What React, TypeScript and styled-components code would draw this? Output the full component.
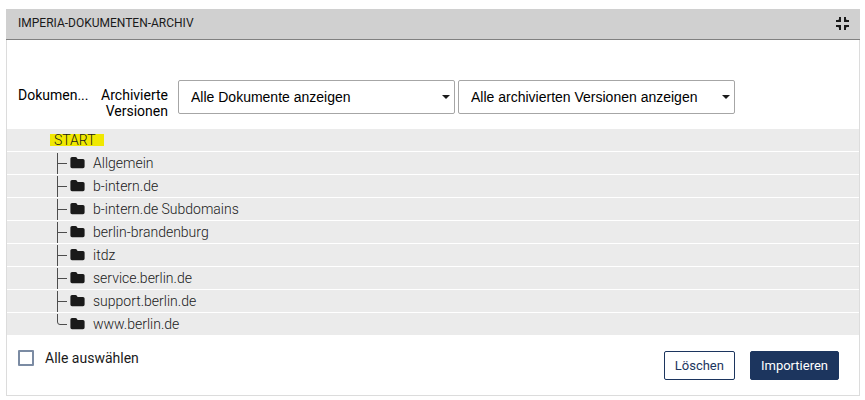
import React from "react";
import styled, { createGlobalStyle } from "styled-components";

const GlobalStyle = createGlobalStyle`
  *, *::before, *::after { box-sizing: border-box; }
  body {
    margin: 0;
    background: #fff;
    color: #1a1a1a;
    font-family: Roboto, "Liberation Sans", sans-serif;
    font-size: 14px;
  }
`;

const Panel = styled.section`
  margin: 9px 5px 4px 6px;
  border: 1px solid #dcdcdc;
  border-top: 0;
`;

const Header = styled.header`
  display: flex;
  align-items: center;
  justify-content: space-between;
  height: 31px;
  margin: 0 -1px;
  padding: 0 10px 0 12px;
  background: #d0d0d0;
  border-bottom: 1px solid #808080;
`;

const Title = styled.h1`
  margin: 0;
  padding-bottom: 2px;
  font-size: 12px;
  font-weight: 400;
  line-height: 16px;
  text-transform: uppercase;
`;

const IconButton = styled.button`
  display: flex;
  padding: 0;
  border: 0;
  background: none;
  color: #1a1a1a;
  cursor: pointer;
`;

const Filters = styled.div`
  display: flex;
  align-items: flex-start;
  padding: 40px 11px 10px;
`;

const FilterLabel = styled.label<{ $width: number }>`
  flex: none;
  width: ${(p) => p.$width}px;
  padding-top: 7px;
  color: #000;
  line-height: 16px;
  text-align: right;
`;

const Selects = styled.div`
  display: flex;
  flex: 0 1 557px;
  gap: 3px;
  margin-left: 10px;
`;

const SelectBox = styled.div`
  position: relative;
  flex: 1 1 0;
  min-width: 0;
`;

const Select = styled.select`
  display: block;
  width: 100%;
  height: 34px;
  padding: 0 24px 0 12px;
  border: 1px solid #a6a6a6;
  border-radius: 2px;
  background: #fff;
  color: #000;
  font-family: "Liberation Sans", Arial, sans-serif;
  font-size: 14px;
  appearance: none;
`;

const Caret = styled.svg`
  position: absolute;
  top: 15px;
  right: 5px;
  pointer-events: none;
`;

const Tree = styled.ul`
  margin: 0;
  padding: 0;
  list-style: none;
`;

const TreeRow = styled.li`
  display: flex;
  align-items: center;
  height: 22px;
  padding-left: 50px;
  background: #ebebeb;
  font-weight: 300;
  line-height: 20px;

  & + & { margin-top: 1px; }
`;

const RootLink = styled.a`
  height: 12px;
  margin-left: -7px;
  padding: 0 8px 0 4px;
  background: #f0e800;
  color: inherit;
  line-height: 12px;
  text-decoration: none;
`;

const NodeLink = styled.a`
  margin-left: 8px;
  color: inherit;
  text-decoration: none;
`;

const Branch = styled.svg`
  flex: none;
  margin-right: 3px;
`;

const Footer = styled.footer`
  display: flex;
  align-items: flex-start;
  justify-content: space-between;
  padding: 14px 20px 15px 11px;
`;

const CheckLabel = styled.label`
  display: flex;
  align-items: center;
  gap: 11px;
  line-height: 18px;
`;

const Checkbox = styled.input`
  width: 16px;
  height: 16px;
  margin: 0;
  border: 2px solid #7b8ba3;
  border-radius: 1px;
  background: #fff;
  appearance: none;

  &:checked { background: #1c355e; }
`;

const Actions = styled.div`
  display: flex;
  gap: 15px;
  margin-top: 2px;
`;

const Button = styled.button<{ $primary?: boolean }>`
  height: 29px;
  padding: 1px 10px 0;
  border: 1px solid #1c355e;
  border-radius: 2px;
  background: ${(p) => (p.$primary ? "#1c355e" : "#fff")};
  color: ${(p) => (p.$primary ? "#fff" : "#1c355e")};
  font-family: inherit;
  font-size: 13px;
  line-height: 16px;
  cursor: pointer;
`;

const folders = [
  "Allgemein",
  "b-intern.de",
  "b-intern.de Subdomains",
  "berlin-brandenburg",
  "itdz",
  "service.berlin.de",
  "support.berlin.de",
  "www.berlin.de",
];

const CollapseIcon = () => (
  <svg width="15" height="14" viewBox="0 0 15 14" fill="currentColor" aria-hidden="true">
    <path d="M4 0h2v5H1V3h2.200L4 2.200zM9 0h2v2.200l.8.8H14v2H9zM1 8h5v5H4v-2.200L3.200 10H1zM9 8h5v2h-2.200l-.8.8V13H9z" />
  </svg>
);

const FolderIcon = () => (
  <svg width="15" height="12" viewBox="0 0 15 12" fill="#1a1a1a" aria-hidden="true">
    <path d="M2 0h3.500q.8 0 1.200.6L7.600 2H13q1.600 0 1.600 1.600v6q0 1.600-1.600 1.600H2Q.4 11.200.4 9.600V1.600Q.4 0 2 0z" />
  </svg>
);

const BranchLine = ({ last }: { last: boolean }) => (
  <Branch width="10" height="22" viewBox="0 0 10 22" fill="none" stroke="#4d4d4d" aria-hidden="true">
    <path d={last ? "M.5 1v8Q.5 11.500 3 11.500H10" : "M.5 1V22M1 11.500H10"} />
  </Branch>
);

const FilterSelect = ({ id, option }: { id: string; option: string }) => (
  <SelectBox>
    <Select id={id}>
      <option>{option}</option>
    </Select>
    <Caret width="8" height="4" viewBox="0 0 8 4" fill="#1a1a1a" aria-hidden="true">
      <path d="M0 0h8L4 4z" />
    </Caret>
  </SelectBox>
);

export default function App() {
  return (
    <>
      <GlobalStyle />
      <Panel>
        <Header>
          <Title>Imperia-Dokumenten-Archiv</Title>
          <IconButton type="button" aria-label="Verkleinern">
            <CollapseIcon />
          </IconButton>
        </Header>
        <Filters>
          <FilterLabel htmlFor="documents" $width={69}>Dokumen...</FilterLabel>
          <FilterLabel htmlFor="versions" $width={81}>
            Archivierte
            <br />
            Versionen
          </FilterLabel>
          <Selects>
            <FilterSelect id="documents" option="Alle Dokumente anzeigen" />
            <FilterSelect id="versions" option="Alle archivierten Versionen anzeigen" />
          </Selects>
        </Filters>
        <Tree>
          <TreeRow>
            <RootLink href="#start">START</RootLink>
          </TreeRow>
          {folders.map((name, i) => (
            <TreeRow key={name}>
              <BranchLine last={i === folders.length - 1} />
              <FolderIcon />
              <NodeLink href={`#${i}`}>{name}</NodeLink>
            </TreeRow>
          ))}
        </Tree>
        <Footer>
          <CheckLabel>
            <Checkbox type="checkbox" />
            Alle auswählen
          </CheckLabel>
          <Actions>
            <Button type="button">Löschen</Button>
            <Button type="button" $primary>Importieren</Button>
          </Actions>
        </Footer>
      </Panel>
    </>
  );
}
